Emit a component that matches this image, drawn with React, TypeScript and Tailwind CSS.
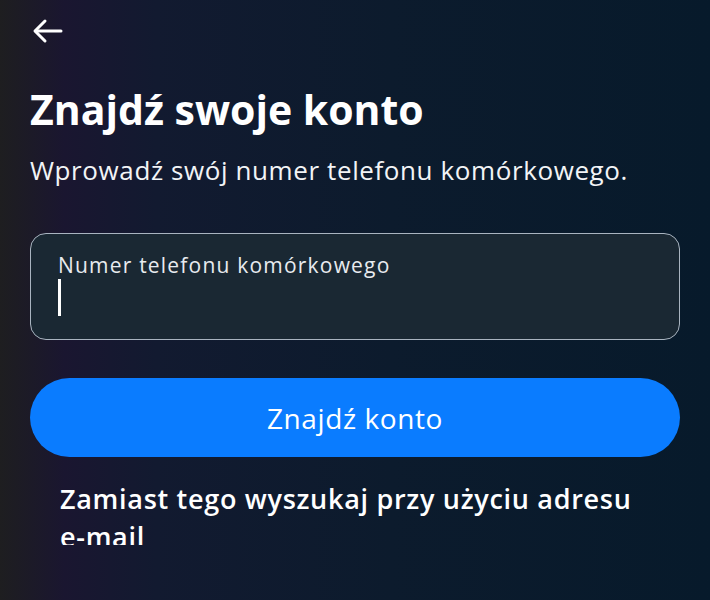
import React from "react";

function BackArrow() {
  return (
    <svg width="32" height="26" viewBox="0 0 32 26" fill="none" stroke="white" strokeWidth="3" strokeLinecap="round" strokeLinejoin="round">
      <path d="M29 13H4" />
      <path d="M13 3L3 13L13 23" />
    </svg>
  );
}

export default function App() {
  return (
    <div
      className="w-[710px] h-[600px] overflow-hidden text-white bg-[linear-gradient(90deg,#1e1e20_0%,#1a1630_9%,#121a30_22%,#0c1b2d_55%,#071a2b_100%)]"
      style={{ fontFamily: "'Open Sans', 'Noto Sans', sans-serif" }}
    >
      <div className="px-[30px] pt-[18px]">
        {/* header */}
        <button className="block ml-[2px]">
          <BackArrow />
        </button>

        <h1 className="mt-[41px] text-[41px] leading-[48px] font-bold">Znajdź swoje konto</h1>
        <p className="mt-[22px] text-[26px] leading-[30px] tracking-[0.6px] text-[#f2f4f6]">
          Wprowadź swój numer telefonu komórkowego.
        </p>

        {/* phone input */}
        <div className="mt-[48px] h-[107px] rounded-[16px] border-[1.5px] border-[#a9b4c0] bg-[#1a2833] px-[27px] pt-[19px]">
          <div className="text-[21px] leading-[24px] tracking-[1.2px] text-[#e8ebef]">Numer telefonu komórkowego</div>
          <div className="mt-[2px] w-[3px] h-[37px] bg-white" />
        </div>

        {/* submit */}
        <button className="mt-[38px] w-full h-[79px] rounded-full bg-[#0a7cff] text-[28px] tracking-[0.6px] font-medium">
          Znajdź konto
        </button>

        {/* alt link */}
        <div className="mt-[23px] px-[30px] h-[65px] overflow-hidden">
          <div className="text-[27px] leading-[38px] tracking-[0.7px] font-semibold">
            Zamiast tego wyszukaj przy użyciu adresu <span className="whitespace-nowrap">e-mail</span>
          </div>
        </div>
      </div>
    </div>
  );
}
